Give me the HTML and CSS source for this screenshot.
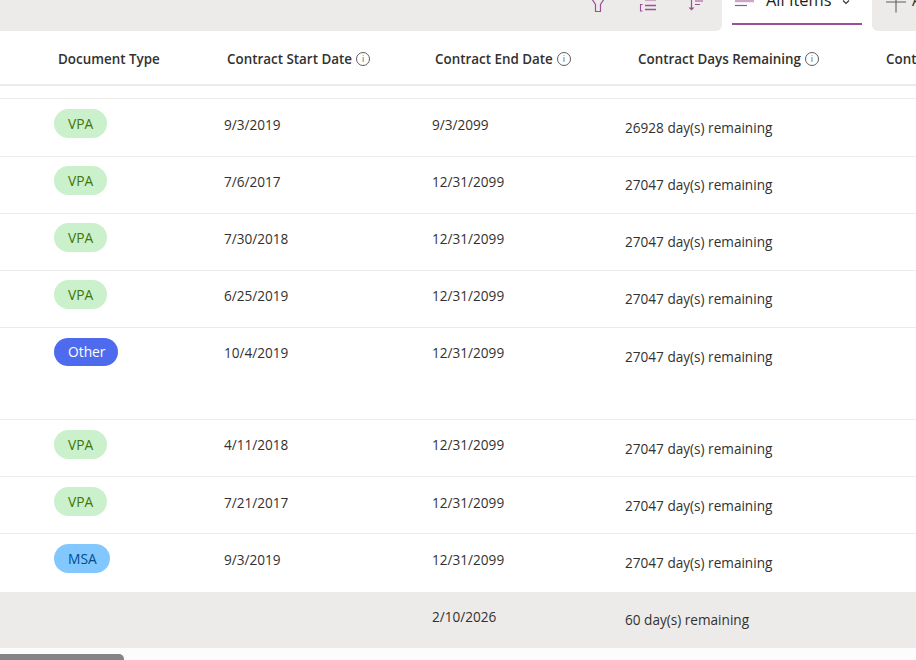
FILE: index.html
```html
<!DOCTYPE html>
<html lang="en">
<head>
<meta charset="utf-8">
<title>Contracts</title>
<link rel="stylesheet" href="styles.css">
</head>
<body>
<div class="toolbar">
  <div class="tools">
    <svg class="tool t-filter" viewBox="0 0 12 12" width="12" height="12"><path d="M-2-4H14L8.500 4.500V11.500H3.500V4.500z" fill="none" stroke="#9b4f96" stroke-width="1.2"/></svg>
    <svg class="tool t-list" viewBox="0 0 18 12" width="18" height="12"><path d="M6 0.500H17" fill="none" stroke="#c9a5c6" stroke-width="1.2"/><path d="M6 5.500H17M6 9.500H17" fill="none" stroke="#9b4f96" stroke-width="1.3"/><path d="M3.500 4.500H1.500V11H3.500" fill="none" stroke="#9b4f96" stroke-width="1.1"/></svg>
    <svg class="tool t-sort" viewBox="0 0 16 12" width="16" height="12"><path d="M3.500-2V9" fill="none" stroke="#9b4f96" stroke-width="1.2"/><path d="M0.500 7.500L3.500 10.500L6.500 7.500z" fill="#9b4f96"/><path d="M7 1H15M7 4.500H12" fill="none" stroke="#9b4f96" stroke-width="1.2"/></svg>
  </div>
  <div class="view-tab">
    <div class="view-inner">
      <svg class="view-icon" viewBox="0 0 20 7" width="20" height="7"><path d="M0 1H19" fill="none" stroke="#c9a5c6" stroke-width="2.500"/><path d="M0 5.500H12" fill="none" stroke="#9b4f96" stroke-width="1.2"/></svg>
      <span class="view-name">All Items</span>
      <svg class="chev" viewBox="0 0 8 5" width="8" height="5"><path d="M1 0.500L4 3.500L7 0.500" fill="none" stroke="#323130" stroke-width="1.1"/></svg>
    </div>
  </div>
  <div class="add-tab">
    <svg class="plus" viewBox="0 0 20 14" width="20" height="14"><path d="M10 0V12.500M0 2H20" fill="none" stroke="#605e5c" stroke-width="1.1"/></svg>
    <span class="add-name">Add view</span>
  </div>
</div>

<div class="head">
  <div class="hcell h-doc">Document Type</div>
  <div class="hcell">Contract Start Date <i class="info">i</i></div>
  <div class="hcell">Contract End Date <i class="info">i</i></div>
  <div class="hcell">Contract Days Remaining <i class="info">i</i></div>
  <div class="hcell">Contract</div>
</div>
<div class="spacer"></div>

<div class="row r58 first"><div class="doc"><span class="pill vpa">VPA</span></div><div class="c-date">9/3/2019</div><div class="c-date">9/3/2099</div><div class="c-days">26928 day(s) remaining</div></div>
<div class="row up"><div class="doc"><span class="pill vpa">VPA</span></div><div class="c-date">7/6/2017</div><div class="c-date">12/31/2099</div><div class="c-days">27047 day(s) remaining</div></div>
<div class="row up"><div class="doc"><span class="pill vpa">VPA</span></div><div class="c-date">7/30/2018</div><div class="c-date">12/31/2099</div><div class="c-days">27047 day(s) remaining</div></div>
<div class="row up"><div class="doc"><span class="pill vpa">VPA</span></div><div class="c-date">6/25/2019</div><div class="c-date">12/31/2099</div><div class="c-days">27047 day(s) remaining</div></div>
<div class="row tall dates-up"><div class="doc"><span class="pill other">Other</span></div><div class="c-date">10/4/2019</div><div class="c-date">12/31/2099</div><div class="c-days">27047 day(s) remaining</div></div>
<div class="row dates-up"><div class="doc"><span class="pill vpa">VPA</span></div><div class="c-date">4/11/2018</div><div class="c-date">12/31/2099</div><div class="c-days">27047 day(s) remaining</div></div>
<div class="row"><div class="doc"><span class="pill vpa">VPA</span></div><div class="c-date">7/21/2017</div><div class="c-date">12/31/2099</div><div class="c-days">27047 day(s) remaining</div></div>
<div class="row r59"><div class="doc"><span class="pill msa">MSA</span></div><div class="c-date">9/3/2019</div><div class="c-date">12/31/2099</div><div class="c-days">27047 day(s) remaining</div></div>
<div class="total"><div></div><div></div><div class="c-date">2/10/2026</div><div class="c-days">60 day(s) remaining</div></div>
<div class="scrollbar"><div class="thumb"></div></div>
</body>
</html>
```
FILE: styles.css
```css
* { box-sizing: border-box; }
html, body { margin: 0; height: 660px; overflow: hidden; }
body { background: #fff; color: #323130; font-family: "Open Sans", "Noto Sans", sans-serif; font-size: 13.6px; }

.toolbar { height: 31px; display: flex; overflow: hidden; }
.tools { width: 722px; height: 31px; background: #edebe9; border-radius: 0 0 6px 0; display: flex; justify-content: flex-end; align-items: flex-start; padding-right: 18px; }
.tool { display: block; overflow: visible; }
.t-list { margin-left: 35px; }
.t-sort { margin-left: 31px; }
.view-tab { width: 150px; height: 31px; padding: 0 10px; }
.view-inner { height: 25px; border-bottom: 2px solid #9b4f96; position: relative; }
.view-icon { position: absolute; left: 3px; top: 0; }
.view-name { position: absolute; left: 34px; top: -12px; font-size: 16.4px; line-height: 24px; color: #201f1e; white-space: nowrap; }
.chev { position: absolute; left: 110px; top: 0; }
.add-tab { flex: 1; height: 31px; background: #edebe9; border-radius: 0 0 0 6px; display: flex; align-items: flex-start; padding-left: 14px; overflow: hidden; white-space: nowrap; }
.plus { display: block; flex: none; }
.add-name { margin-left: 6px; margin-top: -12px; font-size: 16.4px; line-height: 24px; color: #323130; }

.head { height: 55px; display: grid; grid-template-columns: 227px 208px 203px 248px 1fr; align-items: center; border-bottom: 2px solid #edebe9; white-space: nowrap; }
.hcell { font-size: 13.4px; font-weight: 600; line-height: 20px; padding-top: 2px; display: flex; align-items: center; gap: 4px; overflow: hidden; }
.h-doc { padding-left: 58px; }
.info { display: inline-flex; flex: none; width: 14px; height: 14px; border: 1px solid #605e5c; border-radius: 50%; align-items: center; justify-content: center; font-style: normal; font-weight: 400; font-size: 9px; line-height: 1; color: #605e5c; }
.spacer { height: 12px; }

.row, .total { display: grid; grid-template-columns: 224px 208px 193px 1fr; line-height: 20px; }
.row { height: 57px; border-top: 1px solid #edebe9; }
.r58 { height: 58px; }
.r59 { height: 59px; }
.tall { height: 92px; }
.doc { padding: 10px 0 0 54px; }
.pill { display: block; width: fit-content; height: 29px; line-height: 30px; border-radius: 15px; padding: 0 13.500px 0 14px; font-size: 13.800px; }
.vpa { background: #caf0cc; color: #437406; }
.other { background: #4f6bed; color: #fff; height: 28px; line-height: 28px; padding: 0 12px 0 14px; }
.msa { background: #83c7ff; color: #004e8c; }
.c-date { padding-top: 16px; }
.c-days { padding-top: 19px; }
.up .doc { padding-top: 9px; }
.up .c-date, .dates-up .c-date { padding-top: 15px; }
.up .c-days { padding-top: 18px; }

.total { height: 56px; background: #edebe9; }
.total .c-date { padding-top: 15px; }
.total .c-days { padding-top: 18px; }
.scrollbar { height: 12px; padding-top: 6px; background: #fcfcfc; }
.thumb { width: 124px; height: 6px; background: #858585; border-radius: 0 5px 0 0; }
```
